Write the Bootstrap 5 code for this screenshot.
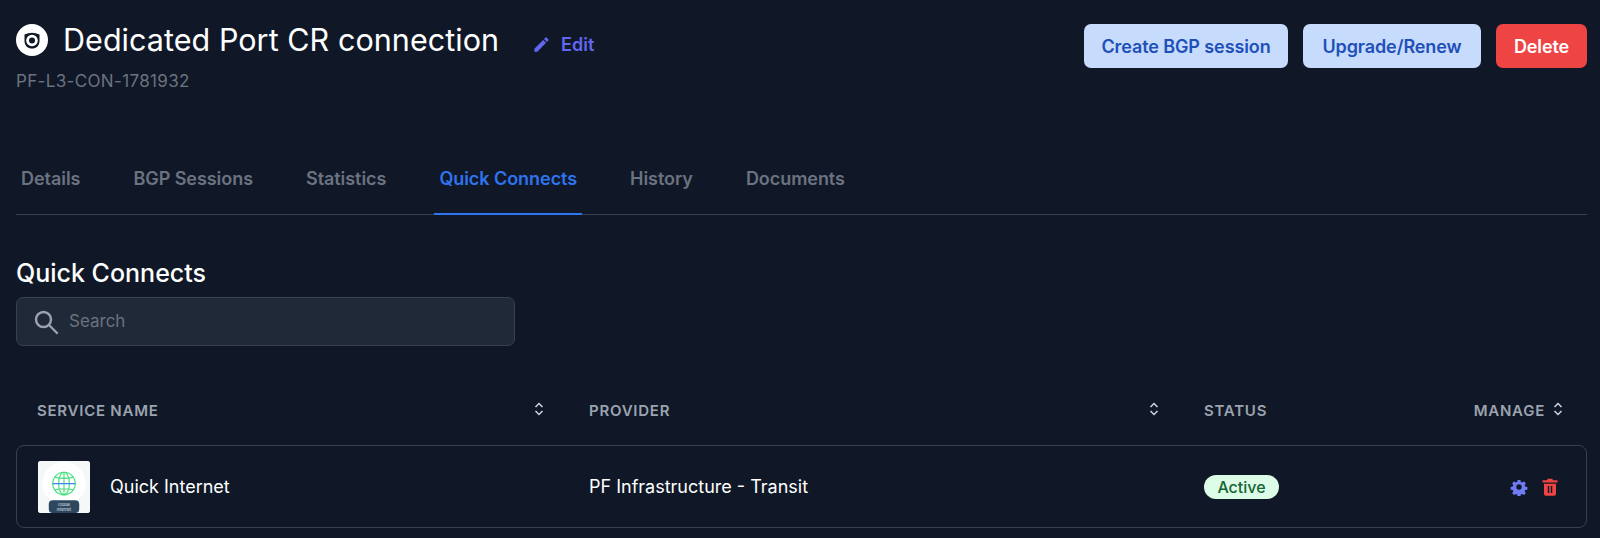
<!DOCTYPE html>
<html lang="en">
<head>
<meta charset="utf-8">
<title>Dedicated Port CR connection</title>
<link href="https://cdn.jsdelivr.net/npm/bootstrap@5.3.0/dist/css/bootstrap.min.css" rel="stylesheet">
<style>
html,body{height:538px;overflow:hidden}
body{background:#101827;color:#fff;font-family:Inter,"Liberation Sans",sans-serif}
.pg{padding:0 13px 0 16px}
.top-area{height:143px;padding-top:24px}
.hd-ic{width:32px;height:32px;margin-right:15px;flex:none}
.hd-title{font-size:30.500px;font-weight:400;line-height:32px;margin:0;letter-spacing:.05px;white-space:nowrap}
.edit-lnk{color:#6366f1;font-size:18px;font-weight:600;text-decoration:none;margin:5px 0 -4px 33px;gap:10px}
.sub-id{color:#6b7280;font-size:17px;line-height:20px;margin-top:15px;letter-spacing:.35px}
.act-btn{height:44px;border-radius:7px;border:0;font-size:18px;font-weight:600;padding:0 8px;letter-spacing:-.1px;white-space:nowrap}
.act-soft{background:#c7dbfc;color:#1e50b8;width:204px}
.act-soft2{width:178px}
.act-del{background:#ef4444;color:#fff;width:91px}
.tab-bar{border-bottom:1px solid #374151;height:72px;gap:43px;align-items:flex-end}
.tab-it{color:#6b7280;font-size:18px;font-weight:600;padding:0 5px 21px;text-decoration:none;margin-bottom:-1px;border-bottom:2px solid transparent;white-space:nowrap;letter-spacing:-.05px}
.tab-it.on{color:#2f74ee;border-bottom-color:#2f74ee}
.sec-h{font-size:25px;font-weight:500;line-height:30px;margin:43px 0 9px}
.srch{width:499px;height:49px;background:#1f2937;border:1px solid #374151;border-radius:7px;padding-left:16px;color:#6b7280;font-size:17px;gap:10px}
.tb-grid{display:grid;grid-template-columns:552px 615px 1fr 42px;align-items:center}
.tb-head{color:#9ca3af;font-size:15px;font-weight:600;letter-spacing:.75px;margin-top:54px;height:18px;padding-left:21px;padding-right:24px}
.th-c{display:flex;justify-content:space-between;align-items:center;padding-right:45px}
.srt{flex:none;margin-top:-5px}
.tb-row{border:1px solid #374151;border-radius:8px;height:83px;margin-top:27px;padding-left:20px;padding-right:27px;font-size:18px}
.thumb{width:52px;height:52px;margin-left:1px;background:#f8f9fb;border-radius:3px;overflow:hidden;flex:none}
.st-pill{background:#dcfce7;color:#166534;font-size:16px;font-weight:500;border-radius:12px;width:75px;height:24px;line-height:24px;text-align:center}
</style>
</head>
<body>
<div class="pg">
  <div class="top-area d-flex justify-content-between align-items-start">
    <div>
      <div class="d-flex align-items-center">
        <svg class="hd-ic" viewBox="0 0 32 32"><circle cx="16" cy="16" r="16" fill="#fff"/><path d="M8.500 10.500 Q16 7 23.500 10.500 V17 C23.500 22 20 24.500 16 24.500 C12 24.500 8.500 22 8.500 17Z" fill="#101827"/><circle cx="16" cy="16.500" r="5.800" fill="#fff"/><circle cx="16" cy="16.500" r="3" fill="#101827"/></svg>
        <h1 class="hd-title">Dedicated Port CR connection</h1>
        <a class="edit-lnk d-flex align-items-center" href="#"><svg width="19" height="19" viewBox="0 0 24 24" fill="#6366f1"><path d="M3 17.250V21h3.750L17.810 9.940l-3.750-3.750L3 17.250zM20.710 7.040a1 1 0 0 0 0-1.410l-2.340-2.340a1 1 0 0 0-1.410 0l-1.830 1.830 3.750 3.750 1.830-1.830z"/></svg>Edit</a>
      </div>
      <div class="sub-id">PF-L3-CON-1781932</div>
    </div>
    <div class="d-flex" style="gap:15px">
      <button class="act-btn act-soft" type="button">Create BGP session</button>
      <button class="act-btn act-soft act-soft2" type="button">Upgrade/Renew</button>
      <button class="act-btn act-del" type="button">Delete</button>
    </div>
  </div>
  <nav class="tab-bar d-flex">
    <a class="tab-it" href="#">Details</a>
    <a class="tab-it" href="#">BGP Sessions</a>
    <a class="tab-it" href="#">Statistics</a>
    <a class="tab-it on" href="#">Quick Connects</a>
    <a class="tab-it" href="#">History</a>
    <a class="tab-it" href="#">Documents</a>
  </nav>
  <h2 class="sec-h">Quick Connects</h2>
  <div class="srch d-flex align-items-center">
    <svg width="26" height="26" viewBox="0 0 26 26" fill="none" stroke="#9ca3af" stroke-width="2.400" stroke-linecap="round"><circle cx="10.500" cy="10.500" r="7.500"/><path d="M16 16l8 8"/></svg>
    <span>Search</span>
  </div>
  <div class="tb-grid tb-head">
    <div class="th-c"><span>SERVICE NAME</span><svg class="srt" width="10" height="14" viewBox="0 0 10 14" fill="none" stroke="#d1d5db" stroke-width="1.500"><path d="M1.500 5 5 1.500 8.500 5M1.500 9 5 12.500 8.500 9"/></svg></div>
    <div class="th-c"><span>PROVIDER</span><svg class="srt" width="10" height="14" viewBox="0 0 10 14" fill="none" stroke="#d1d5db" stroke-width="1.500"><path d="M1.500 5 5 1.500 8.500 5M1.500 9 5 12.500 8.500 9"/></svg></div>
    <div>STATUS</div>
    <div class="d-flex justify-content-end align-items-center gap-2" style="white-space:nowrap"><span>MANAGE</span><svg class="srt" width="10" height="14" viewBox="0 0 10 14" fill="none" stroke="#d1d5db" stroke-width="1.500"><path d="M1.500 5 5 1.500 8.500 5M1.500 9 5 12.500 8.500 9"/></svg></div>
  </div>
  <div class="tb-grid tb-row">
    <div class="d-flex align-items-center" style="gap:20px">
      <svg class="thumb" viewBox="0 0 53 53">
        <rect width="53" height="53" fill="#f6f7f9"/>
        <circle cx="26.500" cy="23" r="22" fill="#fff"/>
        <g fill="none" stroke="#4ade80" stroke-width="1.200"><circle cx="26.500" cy="23" r="11.500"/><ellipse cx="26.500" cy="23" rx="5.500" ry="11.500"/><path d="M26.500 11.500v23M17 16.500Q26.500 19 36 16.500M17 29.500Q26.500 27 36 29.500"/></g>
        <path d="M15 23h23" stroke="#3b82f6" stroke-width="1.300"/>
        <rect x="11" y="40" width="31" height="13" rx="4" fill="#2c475f"/>
        <text x="26.500" y="45.500" font-size="4" fill="#e5e7eb" text-anchor="middle" font-family="Inter,sans-serif">Global</text>
        <text x="26.500" y="50.800" font-size="4" fill="#e5e7eb" text-anchor="middle" font-family="Inter,sans-serif">Internet</text>
      </svg>
      <span>Quick Internet</span>
    </div>
    <div>PF Infrastructure - Transit</div>
    <div><div class="st-pill">Active</div></div>
    <div class="d-flex justify-content-end align-items-center" style="gap:13px">
      <svg class="flex-shrink-0" width="18" height="18" viewBox="0 0 24 24" fill="#6f7cf4"><path fill-rule="evenodd" d="M10 1.500h4l.7 3.200 1.800.8 2.800-1.700 2.800 2.800-1.700 2.800.8 1.800 3.200.7v4l-3.200.7-.8 1.800 1.700 2.800-2.800 2.800-2.800-1.700-1.800.8-.7 3.200h-4l-.7-3.200-1.800-.8-2.800 1.700-2.800-2.800 1.700-2.800-.8-1.800-3.200-.7v-4l3.200-.7.8-1.800-1.700-2.800 2.800-2.800 2.800 1.700 1.800-.8zM12 8a4 4 0 1 0 0 8 4 4 0 0 0 0-8z" transform="translate(1.200 1.200) scale(.9)"/></svg>
      <svg class="flex-shrink-0" width="18" height="18" viewBox="0 0 24 24" fill="#ef4444"><path fill-rule="evenodd" d="M9 1h6l1 2h6v3H2V3h6zM4 7.500h16V21a2.500 2.500 0 0 1-2.500 2.500h-11A2.500 2.500 0 0 1 4 21zM9 10.500V20h2v-9.500zM13 10.500V20h2v-9.500z"/></svg>
    </div>
  </div>
</div>
</body>
</html>
